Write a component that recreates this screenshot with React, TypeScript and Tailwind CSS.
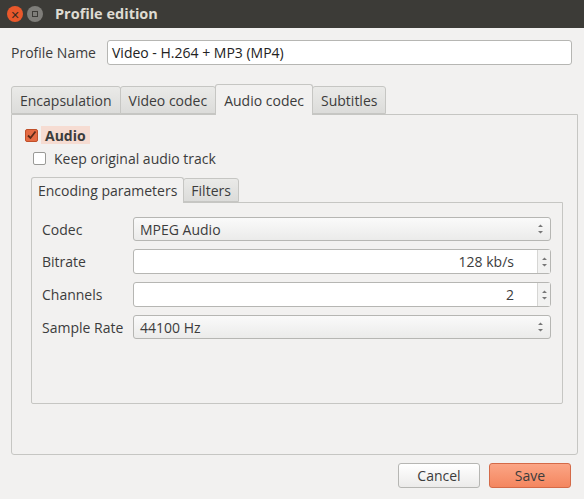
const F = { fontFamily: '"Open Sans","DejaVu Sans",sans-serif' };

function Arrows() {
  return (
    <svg width="7" height="12" viewBox="0 0 7 12"><path d="M1 4 L3.5 1.5 L6 4Z M1 8 L3.5 10.5 L6 8Z" fill="#777" /></svg>
  );
}

function Combo({ v }: { v: string }) {
  return (
    <div className="flex-1 h-[24px] flex items-center justify-between px-[6px] rounded-[3px] border border-[#b6b6b3] bg-gradient-to-b from-[#fafafa] to-[#ebebea] text-[#3c3c3c]">
      <span>{v}</span><Arrows />
    </div>
  );
}

function Spin({ v }: { v: string }) {
  return (
    <div className="flex-1 h-[25px] flex rounded-[3px] border border-[#b6b6b3] bg-white text-[#3c3c3c]">
      <div className="flex-1 flex items-center justify-end pr-[23px]">{v}</div>
      <div className="w-[13px] border-l border-[#d6d6d4] bg-[#f2f2f1] flex items-center justify-center"><Arrows /></div>
    </div>
  );
}

export default function App() {
  const tab = "h-[28px] px-[8px] flex items-center border border-[#c6c6c3] rounded-t-[3px] bg-gradient-to-b from-[#eaeae8] to-[#dcdcda] -mr-px";
  return (
    <div style={F} className="w-[584px] h-[499px] bg-[#f2f1f0] text-[14px] text-[#3c3c3c] flex flex-col">
      <div className="h-[28px] bg-[#3c3b37] flex items-center px-[7px] gap-[4px]">
        <div className="w-[16px] h-[16px] rounded-full bg-[#e9582b] flex items-center justify-center text-[#3a2a20] text-[11px] font-bold leading-none">✕</div>
        <div className="w-[16px] h-[16px] rounded-full bg-[#7f7e7a] flex items-center justify-center"><div className="w-[6px] h-[6px] border border-[#3c3b37]" /></div>
        <span className="ml-[8px] text-[#dfdbd2] font-bold text-[14.5px]">Profile edition</span>
      </div>
      <div className="flex items-center mt-[12px] px-[11px]">
        <span className="w-[96px]">Profile Name</span>
        <div className="flex-1 h-[25px] border border-[#b6b6b3] rounded-[3px] bg-white flex items-center px-[4px] mr-[1px] text-[#222]">Video - H.264 + MP3 (MP4)</div>
      </div>
      <div className="mt-[19px] mx-[11px] flex items-end h-[30px]">
        <div className={tab}>Encapsulation</div>
        <div className={tab}>Video codec</div>
        <div className="h-[31px] px-[8px] flex items-center border border-b-0 border-[#c6c6c3] rounded-t-[3px] bg-[#f2f1f0] -mr-px relative z-10 -mb-px">Audio codec</div>
        <div className={tab}>Subtitles</div>
      </div>
      <div className="mx-[11px] w-[567px] h-[341px] border border-[#c6c6c3] rounded-b-[3px] px-[13px] pt-[11px] flex flex-col">
        <div className="flex items-center gap-[3px]">
          <div className="w-[13px] h-[13px] rounded-[2px] bg-[#e46b43] border border-[#c0502a] flex items-center justify-center">
            <svg width="11" height="11" viewBox="0 0 11 11"><path d="M2 5.5 L4.5 8 L9.5 1.5" stroke="#5a2a18" strokeWidth="1.8" fill="none" /></svg>
          </div>
          <span className="px-[4px] bg-[#f6dcd2] font-bold h-[18px] flex items-center">Audio</span>
        </div>
        <div className="flex items-center gap-[8px] mt-[4px] ml-[8px]">
          <div className="w-[13px] h-[13px] rounded-[2px] bg-white border border-[#9a9a97]" />
          <span>Keep original audio track</span>
        </div>
        <div className="mt-[7px] ml-[6px] flex items-end h-[26px]">
          <div className="h-[26px] px-[6px] flex items-center border border-b-0 border-[#c6c6c3] rounded-t-[3px] bg-[#f2f1f0] -mr-px relative z-10 -mb-px">Encoding parameters</div>
          <div className="h-[24px] px-[7px] flex items-center border border-[#c6c6c3] rounded-t-[3px] bg-gradient-to-b from-[#eaeae8] to-[#dcdcda]">Filters</div>
        </div>
        <div className="ml-[6px] w-[532px] h-[202px] border border-[#c6c6c3] rounded-b-[2px] pl-[10px] pr-[11px] pt-[14px] flex flex-col gap-[8px]">
          <div className="flex items-center"><span className="w-[91px]">Codec</span><Combo v="MPEG Audio" /></div>
          <div className="flex items-center"><span className="w-[91px]">Bitrate</span><Spin v="128 kb/s" /></div>
          <div className="flex items-center"><span className="w-[91px]">Channels</span><Spin v="2" /></div>
          <div className="flex items-center"><span className="w-[91px]">Sample Rate</span><Combo v="44100 Hz" /></div>
        </div>
      </div>
      <div className="flex justify-end gap-[9px] mt-[8px] pr-[13px]">
        <div className="w-[82px] h-[25px] rounded-[3px] border border-[#b6b6b3] bg-gradient-to-b from-white to-[#ecebea] flex items-center justify-center">Cancel</div>
        <div className="w-[82px] h-[25px] rounded-[3px] border border-[#d46a48] bg-gradient-to-b from-[#fba585] to-[#f4865f] flex items-center justify-center">Save</div>
      </div>
    </div>
  );
}
